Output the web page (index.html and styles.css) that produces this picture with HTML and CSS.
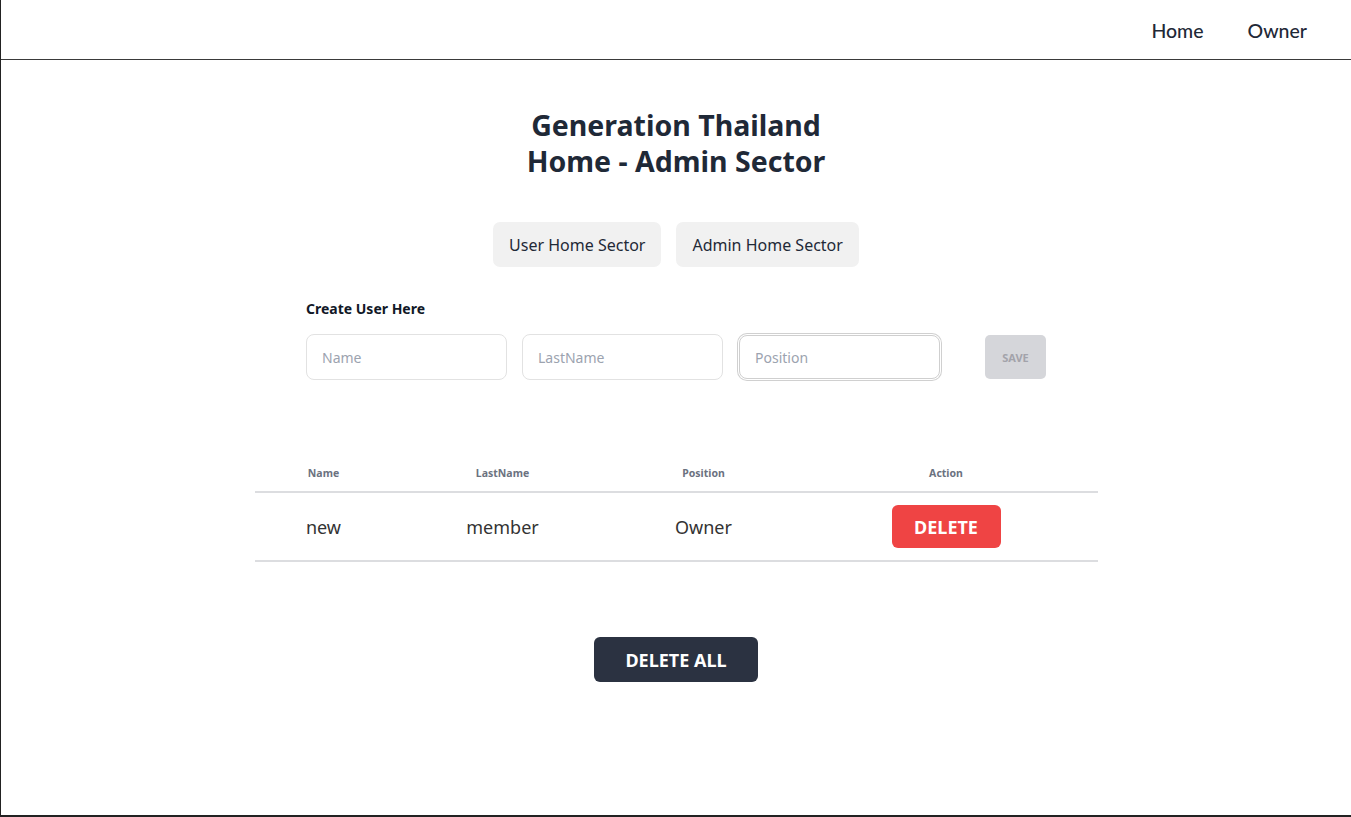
FILE: index.html
```html
<!DOCTYPE html>
<html>
<head>
<meta charset="utf-8">
<link rel="stylesheet" href="styles.css">
</head>
<body>
<div class="page">
  <header class="topbar">
    <nav class="nav">
      <a class="nav-link">Home</a>
      <a class="nav-link">Owner</a>
    </nav>
  </header>
  <main class="main">
    <h1 class="title">Generation Thailand<br>Home - Admin Sector</h1>
    <div class="sectors">
      <button class="sector-btn">User Home Sector</button>
      <button class="sector-btn">Admin Home Sector</button>
    </div>
    <section class="create">
      <h2 class="create-title">Create User Here</h2>
      <div class="create-row">
        <input class="field" placeholder="Name">
        <input class="field" placeholder="LastName">
        <input class="field field-focus" placeholder="Position">
        <button class="save-btn">SAVE</button>
      </div>
    </section>
    <table class="users">
      <thead>
        <tr>
          <th class="c1">Name</th>
          <th class="c2">LastName</th>
          <th class="c3">Position</th>
          <th class="c4">Action</th>
        </tr>
      </thead>
      <tbody>
        <tr>
          <td>new</td>
          <td>member</td>
          <td>Owner</td>
          <td><button class="delete-btn">DELETE</button></td>
        </tr>
      </tbody>
    </table>
    <button class="delete-all">DELETE ALL</button>
  </main>
</div>
</body>
</html>
```
FILE: styles.css
```css
* { box-sizing: border-box; }
html, body { margin: 0; padding: 0; background: #fff; }
body { font-family: "Noto Sans", "Open Sans", sans-serif; color: #1f2937; }

.page {
  height: 817px;
  border-left: 1px solid #222;
  border-bottom: 2px solid #222;
  display: flex;
  flex-direction: column;
}

.topbar {
  height: 60px;
  border-bottom: 1px solid #3a3a3a;
  display: flex;
  justify-content: flex-end;
  align-items: center;
  padding: 2px 44px 0 0;
}
.nav { display: flex; gap: 44px; }
.nav-link {
  font-family: Lato, sans-serif;
  font-size: 19.5px;
  color: #1f2937;
  font-weight: 500;
}

.main {
  display: flex;
  flex-direction: column;
  align-items: center;
}

.title {
  margin: 47px 0 0;
  font-size: 28.5px;
  line-height: 36px;
  font-weight: 700;
  text-align: center;
  color: #1f2937;
}

.sectors {
  display: flex;
  gap: 15px;
  margin-top: 43px;
}
.sector-btn {
  font-family: inherit;
  font-size: 16px;
  color: #1f2937;
  background: #f1f1f1;
  border: none;
  border-radius: 7px;
  height: 45px;
  padding: 0 16px;
}

.create {
  width: 740px;
  margin-top: 32px;
}
.create-title {
  margin: 0;
  font-size: 14px;
  font-weight: 700;
  color: #111827;
  line-height: 20px;
}
.create-row {
  display: flex;
  align-items: center;
  margin-top: 15px;
}
.field {
  width: 201px;
  height: 46px;
  border: 1px solid #e2e2e2;
  border-radius: 8px;
  padding: 0 15px;
  font-family: inherit;
  font-size: 14px;
  color: #333;
  margin-right: 15px;
  background: #fff;
}
.field::placeholder { color: #9ca3af; }
.field-focus {
  width: 201px;
  height: 44px;
  border: 1px solid #cfcfcf;
  box-shadow: 0 0 0 1px #fff, 0 0 0 2px #d0d0d0;
  margin-left: 1px;
  margin-right: 45px;
}
.save-btn {
  width: 62px;
  height: 44px;
  border: none;
  border-radius: 5px;
  background: #d5d6da;
  color: #a3a3aa;
  font-family: inherit;
  font-size: 11px;
  font-weight: 700;
}

.users {
  width: 843px;
  margin-top: 74px;
  border-collapse: collapse;
  table-layout: fixed;
}
.users th {
  font-size: 10.5px;
  font-weight: 700;
  color: #6b7280;
  height: 38px;
  padding: 0;
  text-align: center;
  border-bottom: 2px solid #dcdde0;
}
.c1 { width: 138px; }
.c2 { width: 220px; }
.c3 { width: 182px; }
.c4 { width: 303px; }
.users td {
  text-align: center;
  font-size: 18px;
  color: #333;
  height: 69px;
  padding: 0;
  border-bottom: 2px solid #dcdde0;
}
.delete-btn {
  width: 109px;
  height: 43px;
  border: none;
  border-radius: 6px;
  background: #ef4444;
  color: #fff;
  font-family: inherit;
  font-size: 18px;
  font-weight: 700;
}

.delete-all {
  margin-top: 75px;
  width: 164px;
  height: 45px;
  border: none;
  border-radius: 6px;
  background: #2b3241;
  color: #fff;
  font-family: inherit;
  font-size: 18px;
  font-weight: 700;
}
```
